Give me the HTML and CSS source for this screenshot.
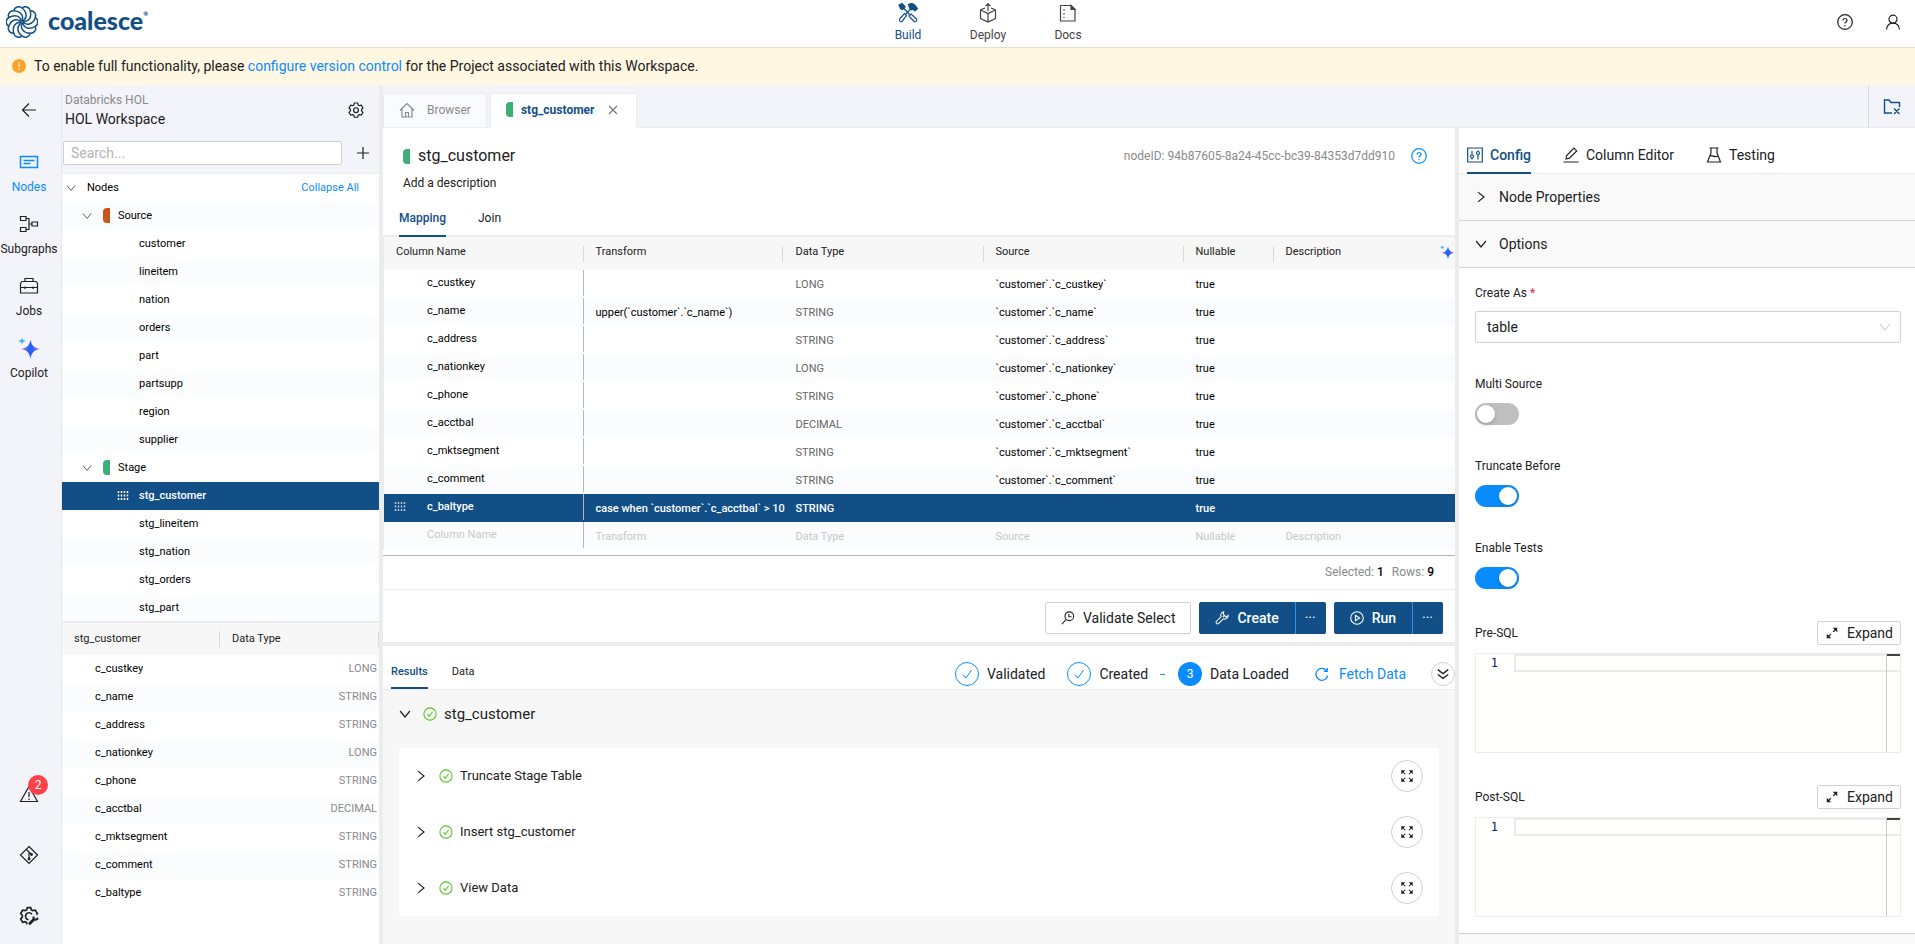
FILE: index.html
```html
<!DOCTYPE html>
<html lang="en">
<head>
<meta charset="utf-8">
<title>Coalesce</title>
<link rel="stylesheet" href="styles.css">
</head>
<body>
<svg class="sprite" aria-hidden="true">
  <defs>
    <linearGradient id="spark" x1="0" y1="0" x2="1" y2="0">
      <stop offset="0" stop-color="#c77be0"/><stop offset=".4" stop-color="#2a62f5"/><stop offset=".6" stop-color="#2a62f5"/><stop offset="1" stop-color="#b07af0"/>
    </linearGradient>
    <path id="petal" d="M0 -1C5 -3 6 -9 0 -14A5 5 0 0 1 8.2 -11.3"/>
  </defs>
  <symbol id="i-down" viewBox="0 0 16 16"><path d="M1.500 4l6.500 8L14.500 4"/></symbol>
  <symbol id="i-right" viewBox="0 0 16 16"><path d="M4 1.500l8 6.500L4 14.500"/></symbol>
  <symbol id="i-gear" viewBox="0 0 24 24"><path d="M9.500 1.500h5l.8 3 1.700 1 3-.8 2.500 4.300-2.200 2.200v2l2.200 2.200-2.500 4.300-3-.8-1.700 1-.8 3h-5l-.8-3-1.700-1-3 .8L1.500 15.400l2.200-2.200v-2L1.500 9 4 4.700l3 .8 1.700-1z"/><circle cx="12" cy="12.200" r="3.600"/></symbol>
  <symbol id="i-help" viewBox="0 0 16 16"><circle cx="8" cy="8" r="7.300"/><path d="M6 6.500c0-2.700 4-2.700 4 0 0 1.600-2 1.500-2 3M8 11v1.200"/></symbol>
  <symbol id="i-check" viewBox="0 0 16 16"><circle cx="8" cy="8" r="7"/><path d="M5.200 8.200l2 2.500 3.600-5"/></symbol>
  <symbol id="i-arrows" viewBox="0 0 16 16"><path d="M2 2l4 4M14 2l-4 4M2 14l4-4M14 14l-4-4"/><path class="solid" stroke="none" d="M1.500 1.500h4.500l-4.500 4.500zM14.500 1.500v4.500l-4.500-4.500zM1.500 14.500v-4.500l4.500 4.500zM14.500 14.500h-4.500l4.500-4.500z"/></symbol>
  <symbol id="i-expand" viewBox="0 0 16 16"><path stroke-width="1.800" d="M2 14l4.500-4.500M14 2L9.500 6.500"/><path class="solid" stroke="none" d="M15 1v6l-6-6zM1 15v-6l6 6z"/></symbol>
  <symbol id="i-spark" viewBox="0 0 24 24"><path fill="url(#spark)" stroke="none" d="M13.500 3.500c1 6 3 8 9.500 9.500-6.500 1.500-8.500 3.500-9.500 10-1-6.500-3-8.500-9.500-10 6.500-1.500 8.500-3.500 9.500-9.500z"/><path fill="#48b4f0" stroke="none" d="M5 1c.4 2.700 1.200 3.500 4 4-2.800.5-3.600 1.300-4 4-.4-2.700-1.200-3.500-4-4 2.800-.5 3.600-1.300 4-4z"/></symbol>
  <symbol id="i-grip" viewBox="0 0 12 10"><path stroke-width="1.500" stroke-dasharray="2 1.500" d="M1.500 0v10M4.500 0v10M7.500 0v10M10.500 0v10"/></symbol>
</svg>

<header class="topbar">
  <a class="brand" href="#">
    <svg class="brand-mark" viewBox="-16 -16 32 32" aria-hidden="true">
      <use href="#petal"/><use href="#petal" transform="rotate(36)"/><use href="#petal" transform="rotate(72)"/><use href="#petal" transform="rotate(108)"/><use href="#petal" transform="rotate(144)"/><use href="#petal" transform="rotate(180)"/><use href="#petal" transform="rotate(216)"/><use href="#petal" transform="rotate(252)"/><use href="#petal" transform="rotate(288)"/><use href="#petal" transform="rotate(324)"/>
    </svg>
    <span class="brand-name">coalesce<sup>®</sup></span>
  </a>
  <nav class="topnav">
    <a class="topnav-item active" href="#">
      <svg class="ic20" viewBox="0 0 20 20"><path class="solid" d="M1 2l3-1.500 3 3-.5 1.500-2 1.500L2.500 5.500zM10.500 1.500c3-1.500 5.500-.5 6.500 1l2.500 3-2.500 2.500-2-2-1.500 1-2-2z"/><path d="M5 4.500l6.500 7M13 5.500L8 11"/><path d="M11 13l2-2 5.500 5c1 1.500-1 3.500-2.500 2.500zM8.500 12.500l-2-2-4.500 5c-1.500 2 .5 4 2.200 2.700z"/></svg>
      Build</a>
    <a class="topnav-item" href="#">
      <svg class="ic20" viewBox="0 0 20 20"><path d="M7 5L2.500 7v8.500L10 19l7.500-3.500V7L13 5M2.500 7l7.500 3.500L17.500 7M10 10.500V19M10 8V1M7.500 3L10 .7 12.500 3"/></svg>
      Deploy</a>
    <a class="topnav-item" href="#">
      <svg class="ic20" viewBox="0 0 20 20"><path d="M2.500 2.500h10.500l4 4v11.500h-14.500z"/><path class="solid" d="M13 2.500l4 4h-4z"/><path stroke-dasharray="1.500 2.500" d="M6 6v9"/></svg>
      Docs</a>
  </nav>
  <div class="top-actions">
    <button class="icon-btn" aria-label="Help"><svg class="ic16"><use href="#i-help"/></svg></button>
    <button class="icon-btn" aria-label="Account"><svg class="ic16" viewBox="0 0 16 16"><circle cx="8" cy="5.200" r="4"/><path d="M1.500 15.500C2 11 5 9.200 8 9.200s6 1.800 6.500 6.300"/></svg></button>
  </div>
</header>

<div class="banner">
  <svg class="banner-ic" viewBox="0 0 14 14"><circle cx="7" cy="7" r="7"/><path d="M7 3v5M7 9.500v1.500"/></svg>
  <span>To enable full functionality, please <a href="#">configure version control</a> for the Project associated with this Workspace.</span>
</div>

<div class="workspace">
  <nav class="rail">
    <button class="rail-back" aria-label="Back"><svg class="ic16" viewBox="0 0 16 16"><path d="M15 8H2M8 1.500L1.500 8 8 14.500"/></svg></button>
    <a class="rail-item active" href="#"><svg class="ic20" viewBox="0 0 20 20"><path stroke-width="1.500" d="M1.500 4.500h17v11h-17zM4.500 8.500h11M4.500 11.500h7"/></svg>Nodes</a>
    <a class="rail-item" href="#"><svg class="ic20" viewBox="0 0 20 20"><path d="M1.500 2.500h5.500v4H1.500zM1.500 13.500h5.500v4H1.500zM13 8h5.500v4H13zM7 4.500h3v11H7M10 10h3"/></svg>Subgraphs</a>
    <a class="rail-item" href="#"><svg class="ic20" viewBox="0 0 20 20"><path d="M1.500 7.500l1.500-2h14l1.500 2v9.500h-17zM1.500 11.500h17M6 5.500v-3h8v3M6 10.500v2.500M14 10.500v2.500"/></svg>Jobs</a>
    <a class="rail-item" href="#"><svg class="ic24 spark"><use href="#i-spark"/></svg>Copilot</a>
    <div class="rail-bottom">
      <button class="rail-tool" aria-label="Problems"><svg class="ic20" viewBox="0 0 20 20"><path d="M10 2.500L18.500 17.500h-17zM10 8v5M10 14.500v1.500"/></svg><span class="badge">2</span></button>
      <button class="rail-tool" aria-label="Git"><svg class="ic20" viewBox="0 0 20 20"><path d="M10 1.500L18.500 10 10 18.500 1.500 10zM7.500 4.500l5 5M10 7v7.500"/><circle class="solid" cx="10" cy="14" r=".8"/><circle class="solid" cx="12.500" cy="9.500" r=".8"/></svg></button>
      <button class="rail-tool" aria-label="Build settings"><svg class="ic20" viewBox="0 0 24 24"><path stroke-width="2" d="M21 10.500l1-1.500-2.500-4-3 .6-1.700-1-.8-2.600h-4l-1 2.600-1.700 1-3-.6L2 9l2 2.300v2L2 15.500l2.300 4 3-.6 1.700 1 .5 2.100M15.500 10a4.200 4.200 0 1 0-4 6.500"/><path stroke-width="3.500" d="M12 22l6-6"/><path stroke-width="2.500" d="M17.500 12.500v3.500l3 .5 2.500-2"/></svg></button>
    </div>
  </nav>

  <aside class="side">
    <div class="side-head">
      <div class="side-title">
        <div><div class="project">Databricks HOL</div><div class="wsname">HOL Workspace</div></div>
        <button class="icon-btn gear" aria-label="Workspace settings"><svg class="ic16"><use href="#i-gear"/></svg></button>
      </div>
      <div class="side-search">
        <input type="text" placeholder="Search..." aria-label="Search nodes">
        <button class="icon-btn" aria-label="Add node"><svg class="ic12" viewBox="0 0 12 12"><path d="M6 0v12M0 6h12"/></svg></button>
      </div>
    </div>
    <ul class="tree">
      <li class="lvl0"><svg class="ic10"><use href="#i-down"/></svg><span>Nodes</span><a href="#">Collapse All</a></li>
      <li class="lvl1"><svg class="ic10"><use href="#i-down"/></svg><i class="mark source"></i>Source</li>
      <li class="leaf">customer</li>
      <li class="leaf">lineitem</li>
      <li class="leaf">nation</li>
      <li class="leaf">orders</li>
      <li class="leaf">part</li>
      <li class="leaf">partsupp</li>
      <li class="leaf">region</li>
      <li class="leaf">supplier</li>
      <li class="lvl1"><svg class="ic10"><use href="#i-down"/></svg><i class="mark"></i>Stage</li>
      <li class="leaf current"><svg class="grip"><use href="#i-grip"/></svg>stg_customer</li>
      <li class="leaf">stg_lineitem</li>
      <li class="leaf">stg_nation</li>
      <li class="leaf">stg_orders</li>
      <li class="leaf">stg_part</li>
    </ul>
    <div class="side-cols">
      <table class="cols">
        <thead><tr><th>stg_customer</th><th>Data Type</th></tr></thead>
        <tbody>
          <tr><td>c_custkey</td><td>LONG</td></tr>
          <tr><td>c_name</td><td>STRING</td></tr>
          <tr><td>c_address</td><td>STRING</td></tr>
          <tr><td>c_nationkey</td><td>LONG</td></tr>
          <tr><td>c_phone</td><td>STRING</td></tr>
          <tr><td>c_acctbal</td><td>DECIMAL</td></tr>
          <tr><td>c_mktsegment</td><td>STRING</td></tr>
          <tr><td>c_comment</td><td>STRING</td></tr>
          <tr><td>c_baltype</td><td>STRING</td></tr>
        </tbody>
      </table>
    </div>
  </aside>

  <div class="content">
    <div class="tabbar">
      <button class="doc-tab"><svg class="ic16" viewBox="0 0 16 16"><path d="M1 8.500L8 1.500l7 7M3 7v8h10V7M6.500 15v-4.500h3V15"/></svg><span>Browser</span></button>
      <button class="doc-tab active"><i class="mark"></i><span>stg_customer</span><svg class="ic10" viewBox="0 0 10 10"><path d="M1 1l8 8M9 1L1 9"/></svg></button>
      <button class="folder-btn" aria-label="Close folder"><svg class="ic18" viewBox="0 0 18 18"><path stroke-width="1.400" d="M9 15H1.500V2h4.500l2 2.500h8.500V9M11 10.500l5.500 5.500M16.500 10.500L11 16"/></svg></button>
    </div>

    <div class="panes">
      <main class="main">
        <section class="editor">
          <div class="node-head">
            <div class="node-title"><i class="mark"></i><h1>stg_customer</h1><span class="node-id">nodeID: 94b87605-8a24-45cc-bc39-84353d7dd910</span><button class="icon-btn blue" aria-label="Node help"><svg class="ic16"><use href="#i-help"/></svg></button></div>
            <p class="desc">Add a description</p>
            <div class="sub-tabs map-tabs"><button class="active">Mapping</button><button>Join</button></div>
          </div>
          <table class="mapping">
            <colgroup><col class="w200"><col class="w200"><col class="w200"><col class="w200"><col class="w90"><col></colgroup>
            <thead><tr><th>Column Name</th><th>Transform</th><th>Data Type</th><th>Source</th><th>Nullable</th><th><span class="th-last">Description<svg class="ic16"><use href="#i-spark"/></svg></span></th></tr></thead>
            <tbody>
              <tr><td>c_custkey</td><td></td><td>LONG</td><td>`customer`.`c_custkey`</td><td>true</td><td></td></tr>
              <tr><td>c_name</td><td>upper(`customer`.`c_name`)</td><td>STRING</td><td>`customer`.`c_name`</td><td>true</td><td></td></tr>
              <tr><td>c_address</td><td></td><td>STRING</td><td>`customer`.`c_address`</td><td>true</td><td></td></tr>
              <tr><td>c_nationkey</td><td></td><td>LONG</td><td>`customer`.`c_nationkey`</td><td>true</td><td></td></tr>
              <tr><td>c_phone</td><td></td><td>STRING</td><td>`customer`.`c_phone`</td><td>true</td><td></td></tr>
              <tr><td>c_acctbal</td><td></td><td>DECIMAL</td><td>`customer`.`c_acctbal`</td><td>true</td><td></td></tr>
              <tr><td>c_mktsegment</td><td></td><td>STRING</td><td>`customer`.`c_mktsegment`</td><td>true</td><td></td></tr>
              <tr><td>c_comment</td><td></td><td>STRING</td><td>`customer`.`c_comment`</td><td>true</td><td></td></tr>
              <tr class="selected"><td><svg class="grip"><use href="#i-grip"/></svg>c_baltype</td><td>case when `customer`.`c_acctbal` &gt; 10</td><td>STRING</td><td></td><td>true</td><td></td></tr>
              <tr class="ghost"><td>Column Name</td><td>Transform</td><td>Data Type</td><td>Source</td><td>Nullable</td><td>Description</td></tr>
            </tbody>
          </table>
          <div class="table-foot"><span>Selected: <b>1</b></span><span>Rows: <b>9</b></span></div>
          <div class="actions">
            <button class="btn"><svg class="ic14" viewBox="0 0 16 16"><circle cx="9.500" cy="6" r="5"/><path d="M6 9.500L1 15M9 3.500v3h3"/></svg>Validate Select</button>
            <div class="btn-group">
              <button class="btn primary"><svg class="ic14" viewBox="0 0 16 16"><path d="M9 7L11.500 4.500M10 1c-3 .5-4 3-3 5.500L1.500 12c-1 1.500 1 3.500 2.500 2.500L9.500 9c3 1 5.500-1 5.500-4l-2.500 2-3-3z"/></svg>Create</button>
              <button class="btn primary more" aria-label="More create options">···</button>
            </div>
            <div class="btn-group">
              <button class="btn primary"><svg class="ic14" viewBox="0 0 16 16"><circle cx="8" cy="8" r="7.200"/><path d="M6.200 4.800v6.400L11 8z"/></svg>Run</button>
              <button class="btn primary more" aria-label="More run options">···</button>
            </div>
          </div>
        </section>

        <section class="results">
          <div class="res-head">
            <div class="sub-tabs res-tabs"><button class="active">Results</button><button>Data</button></div>
            <div class="steps">
              <span class="step"><svg class="ic24" viewBox="0 0 24 24"><circle cx="12" cy="12" r="11.500"/><path d="M8 12.500l3 3.500 5.500-8"/></svg>Validated</span>
              <span class="step"><svg class="ic24" viewBox="0 0 24 24"><circle cx="12" cy="12" r="11.500"/><path d="M8 12.500l3 3.500 5.500-8"/></svg>Created<i class="dash"></i></span>
              <span class="step"><b class="num">3</b>Data Loaded</span>
              <a class="fetch" href="#"><svg class="ic14" viewBox="0 0 16 16"><path stroke-width="1.500" d="M13.500 4.500A6.800 6.800 0 1 0 14.500 10M14 1v4h-4"/></svg>Fetch Data</a>
              <button class="round small" aria-label="Collapse results"><svg class="ic14" viewBox="0 0 16 16"><path stroke-width="1.500" d="M2 3l6 4.500L14 3M2 8.500L8 13l6-4.500"/></svg></button>
            </div>
          </div>
          <div class="res-body">
            <div class="res-title"><svg class="ic12"><use href="#i-down"/></svg><svg class="ic14 green"><use href="#i-check"/></svg>stg_customer</div>
            <div class="res-card">
              <div class="res-row"><svg class="ic12"><use href="#i-right"/></svg><svg class="ic14 green"><use href="#i-check"/></svg><span>Truncate Stage Table</span><button class="round" aria-label="Expand Truncate Stage Table"><svg class="ic14"><use href="#i-arrows"/></svg></button></div>
              <div class="res-row"><svg class="ic12"><use href="#i-right"/></svg><svg class="ic14 green"><use href="#i-check"/></svg><span>Insert stg_customer</span><button class="round" aria-label="Expand Insert stg_customer"><svg class="ic14"><use href="#i-arrows"/></svg></button></div>
              <div class="res-row"><svg class="ic12"><use href="#i-right"/></svg><svg class="ic14 green"><use href="#i-check"/></svg><span>View Data</span><button class="round" aria-label="Expand View Data"><svg class="ic14"><use href="#i-arrows"/></svg></button></div>
            </div>
          </div>
        </section>
      </main>

      <aside class="config">
        <div class="cfg-tabs">
          <button class="active"><svg class="ic16" viewBox="0 0 16 16"><path d="M.7 1h14.600v14H.7zM5 4v4M5 11v1.500M11 3.500v1M11 8v4.500"/><circle cx="5" cy="9.500" r="1.500"/><circle cx="11" cy="6" r="1.500"/></svg>Config</button>
          <button><svg class="ic16" viewBox="0 0 16 16"><path d="M.5 15h15M3 12l.7-3.500L11 1.200l2.700 2.700-7.300 7.300z"/></svg>Column Editor</button>
          <button><svg class="ic16" viewBox="0 0 16 16"><path d="M3.500 1h9M5 1v5L1.500 15h13L11 6V1M4 9c3-1.500 4 2 8 0"/></svg>Testing</button>
        </div>
        <button class="fold"><svg class="ic12"><use href="#i-right"/></svg>Node Properties</button>
        <button class="fold"><svg class="ic12"><use href="#i-down"/></svg>Options</button>
        <div class="options">
          <div class="field"><label for="create-as">Create As <em>*</em></label>
            <div class="select-wrap"><select id="create-as"><option>table</option><option>view</option></select><svg class="ic12"><use href="#i-down"/></svg></div></div>
          <div class="field"><label for="multi">Multi Source</label><input id="multi" class="switch" type="checkbox" role="switch"></div>
          <div class="field"><label for="trunc">Truncate Before</label><input id="trunc" class="switch" type="checkbox" role="switch" checked></div>
          <div class="field"><label for="tests">Enable Tests</label><input id="tests" class="switch" type="checkbox" role="switch" checked></div>
          <div class="sql">
            <div class="sql-head"><label for="pre">Pre-SQL</label><button class="expand"><svg class="ic12"><use href="#i-expand"/></svg>Expand</button></div>
            <div class="code"><span class="line-no">1</span><textarea id="pre" rows="1"></textarea><span class="ruler"></span></div>
          </div>
          <div class="sql">
            <div class="sql-head"><label for="post">Post-SQL</label><button class="expand"><svg class="ic12"><use href="#i-expand"/></svg>Expand</button></div>
            <div class="code"><span class="line-no">1</span><textarea id="post" rows="1"></textarea><span class="ruler"></span></div>
          </div>
        </div>
      </aside>
    </div>
  </div>
</div>
</body>
</html>
```

FILE: styles.css
```css
:root {
  --navy: #124f86;
  --blue: #0a8cff;
  --text: #212121;
  --muted: #8a8a8a;
  --line: #ececec;
  --panel: #f3f4f9;
  --stripe: #fbfcfe;
  --green: #3eae77;
}
* { box-sizing: border-box; }
body {
  margin: 0;
  height: 100vh;
  display: flex;
  flex-direction: column;
  overflow: hidden;
  font: 12px/16px Roboto, sans-serif;
  color: var(--text);
  background: #fff;
}
button { font: inherit; color: inherit; background: none; border: 0; padding: 0; cursor: pointer; }
a { color: var(--blue); text-decoration: none; }
ul, p, h1 { margin: 0; padding: 0; }
svg { fill: none; stroke: currentColor; stroke-width: 1.2; flex: none; display: block; }
.solid { fill: currentColor; }
.sprite { position: absolute; width: 0; height: 0; }
.ic10 { width: 10px; height: 10px; }
.ic12 { width: 12px; height: 12px; }
.ic14 { width: 14px; height: 14px; }
.ic16 { width: 16px; height: 16px; }
.ic18 { width: 18px; height: 18px; }
.ic20 { width: 20px; height: 20px; }
.ic24 { width: 24px; height: 24px; }
.icon-btn { display: flex; }
.gear svg { stroke-width: 1.8; }
.blue { color: var(--blue); }
.green { color: #58c322; }
.mark { width: 7px; height: 15px; border-radius: 4px 0 0 4px; background: var(--green); flex: none; }
.mark.source { background: #cb5418; }

.topbar {
  flex: none;
  height: 48px;
  display: grid;
  grid-template-columns: 1fr auto 1fr;
  align-items: center;
  border-bottom: 1px solid #eadfcf;
}
.brand { display: flex; align-items: center; gap: 10px; padding: 0 0 3px 6px; color: var(--navy); }
.brand-mark { width: 32px; height: 32px; stroke-width: 1.5; }
.brand-name { font: 900 25px/32px Lato, sans-serif; padding-bottom: 4px; }
.brand-name sup { font-size: 6px; line-height: 6px; vertical-align: 14px; }
.topnav { display: flex; padding-left: 61px; }
.topnav-item { width: 80px; display: flex; flex-direction: column; align-items: center; gap: 3px; color: #434343; line-height: 18px; }
.topnav-item.active { color: var(--navy); }
.top-actions { display: flex; justify-content: flex-end; gap: 32px; padding: 0 14px 3px 0; }

.banner {
  flex: none;
  height: 37px;
  display: flex;
  align-items: center;
  gap: 8px;
  padding: 0 12px 2px;
  background: #fff7e1;
  font-size: 14px;
}
.banner-ic { width: 14px; height: 14px; fill: #faa32b; stroke: none; }
.banner-ic path { stroke: #fff; stroke-width: 1; }

.workspace { flex: 1; min-height: 0; display: flex; }
.rail { width: 62px; flex: none; display: flex; flex-direction: column; align-items: center; background: var(--panel); border-right: 1px solid #e8e8ec; padding: 17px 3px 18px 0; }
.rail-back { margin-bottom: 34px; }
.rail-item { height: 62px; display: flex; flex-direction: column; align-items: center; gap: 7px; color: var(--text); }
.rail-item.active { color: var(--blue); }
.spark { margin: -2px; }
.rail-bottom { margin-top: auto; display: flex; flex-direction: column; gap: 41px; }
.rail-tool { position: relative; }
.badge { position: absolute; left: 9px; top: -9px; width: 20px; height: 20px; border-radius: 10px; background: #ff4249; color: #fff; line-height: 20px; }

.side { width: 317px; flex: none; display: flex; flex-direction: column; background: #fff; }
.side-head { height: 89px; flex: none; background: var(--panel); border-bottom: 1px solid var(--line); padding: 6px 0 0 1px; }
.side-title { display: flex; align-items: center; justify-content: space-between; padding: 0 15px 0 2px; }
.project { line-height: 18px; color: var(--muted); }
.wsname { font-size: 14px; line-height: 20px; }
.side-search { display: flex; align-items: center; justify-content: space-between; padding-right: 10px; margin-top: 12px; }
.side-search input { width: 279px; height: 24px; border: 1px solid #cfcfcf; border-radius: 2px; padding: 0 7px; font: 14px/20px Roboto, sans-serif; }
.side-search input::placeholder { color: #b5b5b5; }
.tree { flex: 1; min-height: 0; overflow: hidden; list-style: none; color: #000; font-size: 11px; }
.tree li { height: 28px; display: flex; align-items: center; padding-bottom: 1px; }
.tree li:nth-child(even), .cols tbody tr:nth-child(even), .mapping tbody tr:nth-child(even) { background: var(--stripe); }
.tree svg { color: #555; stroke-width: 1.5; }
.tree .lvl0 { padding-left: 4px; padding-right: 20px; gap: 11px; }
.lvl0 a { margin-left: auto; }
.tree .lvl1 { padding-left: 20px; }
.lvl1 .mark { margin: 0 8px 0 11px; }
.tree .leaf { padding-left: 77px; }
.tree li.leaf.current { background: var(--navy); color: #fff; padding-left: 55px; gap: 10px; font-weight: 500; }
svg.grip, .tree .grip { width: 12px; height: 10px; color: #fff; }
.side-cols { flex: 0 0 323px; border-top: 2px solid var(--line); }
table { width: 100%; border-collapse: collapse; table-layout: fixed; color: #000; font-size: 11px; }
th { height: 32px; padding: 0 12px 1px; text-align: left; font-weight: 400; color: var(--text); background: linear-gradient(#d9d9d9, #d9d9d9) right center / 1px 16px no-repeat; }
td { height: 28px; padding: 0 12px; }
thead { background: #f7f7f7; }
.cols th:last-child { width: 159px; }
.cols td { padding: 0 0 1px 33px; }
.cols td:last-child { padding: 0 2px 0 0; text-align: right; color: var(--muted); }

.content { flex: 1; min-width: 0; display: flex; flex-direction: column; border-left: 4px solid var(--line); }
.tabbar { height: 43px; flex: none; display: flex; align-items: flex-end; gap: 3px; background: var(--panel); box-shadow: inset 0 -1px var(--line); }
.doc-tab { height: 35px; display: flex; align-items: center; gap: 12px; padding: 0 15px 2px; border: 1px solid var(--line); background: #fafbfe; color: var(--muted); }
.doc-tab.active { background: #fff; border-bottom-color: #fff; color: var(--navy); font-weight: 700; gap: 8px; }
.doc-tab.active svg { color: #777; margin: 0 3px 0 6px; }
.folder-btn { margin-left: auto; align-self: stretch; width: 47px; display: flex; align-items: center; justify-content: center; border-left: 1px solid #d9d9d9; color: var(--navy); }
.panes { flex: 1; min-height: 0; display: flex; }
.main { flex: 1; min-width: 0; display: flex; flex-direction: column; }
.editor { flex: 1; min-height: 0; display: flex; flex-direction: column; }
.node-head { padding: 16px 16px 0; height: 109px; flex: none; border-bottom: 2px solid var(--line); }
.node-title { display: flex; align-items: center; gap: 8px; padding: 0 12px 0 4px; }
h1 { font-size: 16px; line-height: 24px; font-weight: 400; }
.node-id { margin-left: auto; margin-right: 8px; color: var(--muted); }
.desc { line-height: 18px; padding: 6px 4px 0; }
.sub-tabs { display: flex; }
.sub-tabs button { display: block; border-bottom: 2px solid transparent; }
.sub-tabs .active { color: var(--navy); font-weight: 500; border-bottom-color: var(--navy); }
.map-tabs { gap: 32px; margin-top: 18px; }
.map-tabs button { height: 27px; padding-bottom: 9px; }
.w200 { width: 200px; }
.w90 { width: 90px; }
.mapping { border-left: 1px solid var(--line); }
.mapping th { height: 33px; padding-bottom: 3px; }
.mapping th:last-child { background: none; padding-right: 0; }
.th-last { display: flex; align-items: center; justify-content: space-between; }
.mapping td { padding-top: 1px; }
.mapping td:first-child { padding: 0 0 2px 43px; position: relative; background: linear-gradient(#b5b8bb, #b5b8bb) right top / 1px 26px no-repeat; }
.mapping td:nth-child(3) { color: #666; }
.mapping td .grip { position: absolute; left: 10px; top: 8px; opacity: .7; }
.mapping tr.selected { background: var(--navy); }
.mapping tr.selected td { color: #fff; font-weight: 500; }
.mapping tr.selected td:nth-child(2) { padding-right: 0; white-space: nowrap; }
.mapping tr.ghost td { color: #c8c8c8; }
.table-foot { margin-top: 5px; height: 35px; flex: none; display: flex; align-items: center; justify-content: flex-end; gap: 8px; padding: 0 21px 2px; border-top: 1px solid #b5b5b5; border-bottom: 1px solid var(--line); color: var(--muted); }
.table-foot b { color: #000; font-weight: 500; }
.actions { display: flex; justify-content: flex-end; gap: 8px; padding: 12px; }
.btn { height: 32px; display: flex; align-items: center; gap: 8px; padding: 0 15px; border: 1px solid #d2d2d2; border-radius: 2px; font-size: 14px; box-shadow: 0 2px 0 #00000006; }
.btn.primary { background: var(--navy); border-color: var(--navy); color: #fff; font-weight: 500; }
.btn-group { display: flex; }
.btn-group .btn:first-child { border-radius: 2px 0 0 2px; }
.btn.more { padding: 0 9px; border-left-color: #2d93ea; border-radius: 0 2px 2px 0; font-weight: 400; }

.results { flex: 0 0 302px; display: flex; flex-direction: column; border-top: 4px solid var(--line); background: #f7f7f7; }
.res-head { height: 44px; flex: none; display: flex; align-items: flex-end; justify-content: space-between; background: #fff; border-bottom: 1px solid var(--line); padding-left: 8px; }
.res-tabs { gap: 24px; font-size: 11px; }
.res-tabs button { height: 26px; padding-bottom: 6px; }
.steps { display: flex; align-items: center; font-size: 14px; padding-bottom: 3px; }
.step { display: flex; align-items: center; gap: 8px; margin-right: 22px; }
.step svg { color: var(--blue); stroke-width: 1; }
.dash { width: 5px; height: 1px; background: var(--blue); margin-left: 4px; margin-right: -9px; }
.num { width: 24px; height: 24px; border-radius: 12px; background: var(--blue); color: #fff; font: 12px/24px Roboto, sans-serif; text-align: center; }
.fetch { display: flex; align-items: center; gap: 10px; margin-left: 4px; margin-right: 25px; }
.round { width: 32px; height: 32px; display: flex; align-items: center; justify-content: center; border: 1px solid #d2d2d2; border-radius: 50%; background: #fff; }
.round.small { width: 24px; height: 24px; }
.res-body { padding: 12px 16px; }
.res-title { display: flex; align-items: center; font-size: 15px; line-height: 24px; }
.res-body .ic12, .fold .ic12 { stroke-width: 1.6; }
.res-title svg + svg { margin: 0 7px 0 12px; }
.res-card { margin-top: 22px; background: #fff; border-radius: 2px; }
.res-row { height: 56px; display: flex; align-items: center; padding: 0 16px; font-size: 13px; }
.res-row svg + svg { margin: 0 7px 0 12px; }
.res-row .round { margin-left: auto; }

.config { flex: 0 0 460px; border-left: 4px solid var(--line); overflow: hidden; background: #f9f9f9; }
.cfg-tabs { height: 46px; display: flex; gap: 32px; padding-left: 8px; background: #fff; border-bottom: 1px solid var(--line); font-size: 14px; }
.cfg-tabs button { height: 46px; display: flex; align-items: center; gap: 7px; padding-top: 10px; border-bottom: 2px solid transparent; }
.cfg-tabs .active { color: var(--navy); font-weight: 500; border-color: var(--navy); }
.fold { width: 100%; height: 47px; display: flex; align-items: center; gap: 12px; padding-left: 16px; font-size: 14px; background: #f9f9f9; border-bottom: 1px solid #d6d6d6; }
.options { padding: 16px 14px 16px 16px; background: #fff; border-bottom: 1px solid #d2d2d2; }
.field { display: flex; flex-direction: column; gap: 11px; margin-bottom: 33px; }
.field:first-child { gap: 10px; padding-top: 1px; }
.field:has(+ .sql) { margin-bottom: 32px; }
.field em { color: #f5222d; font-style: normal; }
.select-wrap { display: grid; align-items: center; }
.select-wrap select { grid-area: 1 / 1; appearance: none; height: 32px; border: 1px solid #d2d2d2; border-radius: 2px; padding: 0 11px; background: #fff; font: 14px/20px Roboto, sans-serif; color: var(--text); }
.select-wrap svg { grid-area: 1 / 1; justify-self: end; margin-right: 10px; color: #bbb; pointer-events: none; }
.switch { appearance: none; width: 44px; height: 22px; margin: 0; border-radius: 11px; background: #bfbfbf; padding: 2px; display: flex; }
.switch::before { content: ""; width: 18px; height: 18px; border-radius: 50%; background: #fff; box-shadow: 0 2px 4px #00230b33; }
.switch:checked { background: var(--blue); justify-content: flex-end; }
.sql + .sql { margin-top: 32px; }
.sql-head { display: flex; align-items: center; justify-content: space-between; }
.expand { height: 24px; display: flex; align-items: center; gap: 9px; padding: 0 7px 0 8px; border: 1px solid #d2d2d2; border-radius: 2px; font-size: 14px; }
.code { margin-top: 8px; height: 100px; display: flex; align-items: flex-start; border: 1px solid var(--line); background: #fffffe; }
.line-no { width: 38px; padding-right: 16px; text-align: right; color: #0b216f; font: 12px/18px "DejaVu Sans Mono", monospace; }
.code textarea { flex: 1; min-width: 0; height: 18px; margin: 0; padding: 0; border: 2px solid #eaeaea; border-right: 0; resize: none; background: transparent; overflow: hidden; outline: 0; }
.ruler { width: 14px; align-self: stretch; border-left: 1px solid #c9c9c9; background: linear-gradient(#424242, #424242) top / 100% 2px no-repeat, linear-gradient(#eaeaea, #eaeaea) 0 16px / 100% 2px no-repeat; }
```
